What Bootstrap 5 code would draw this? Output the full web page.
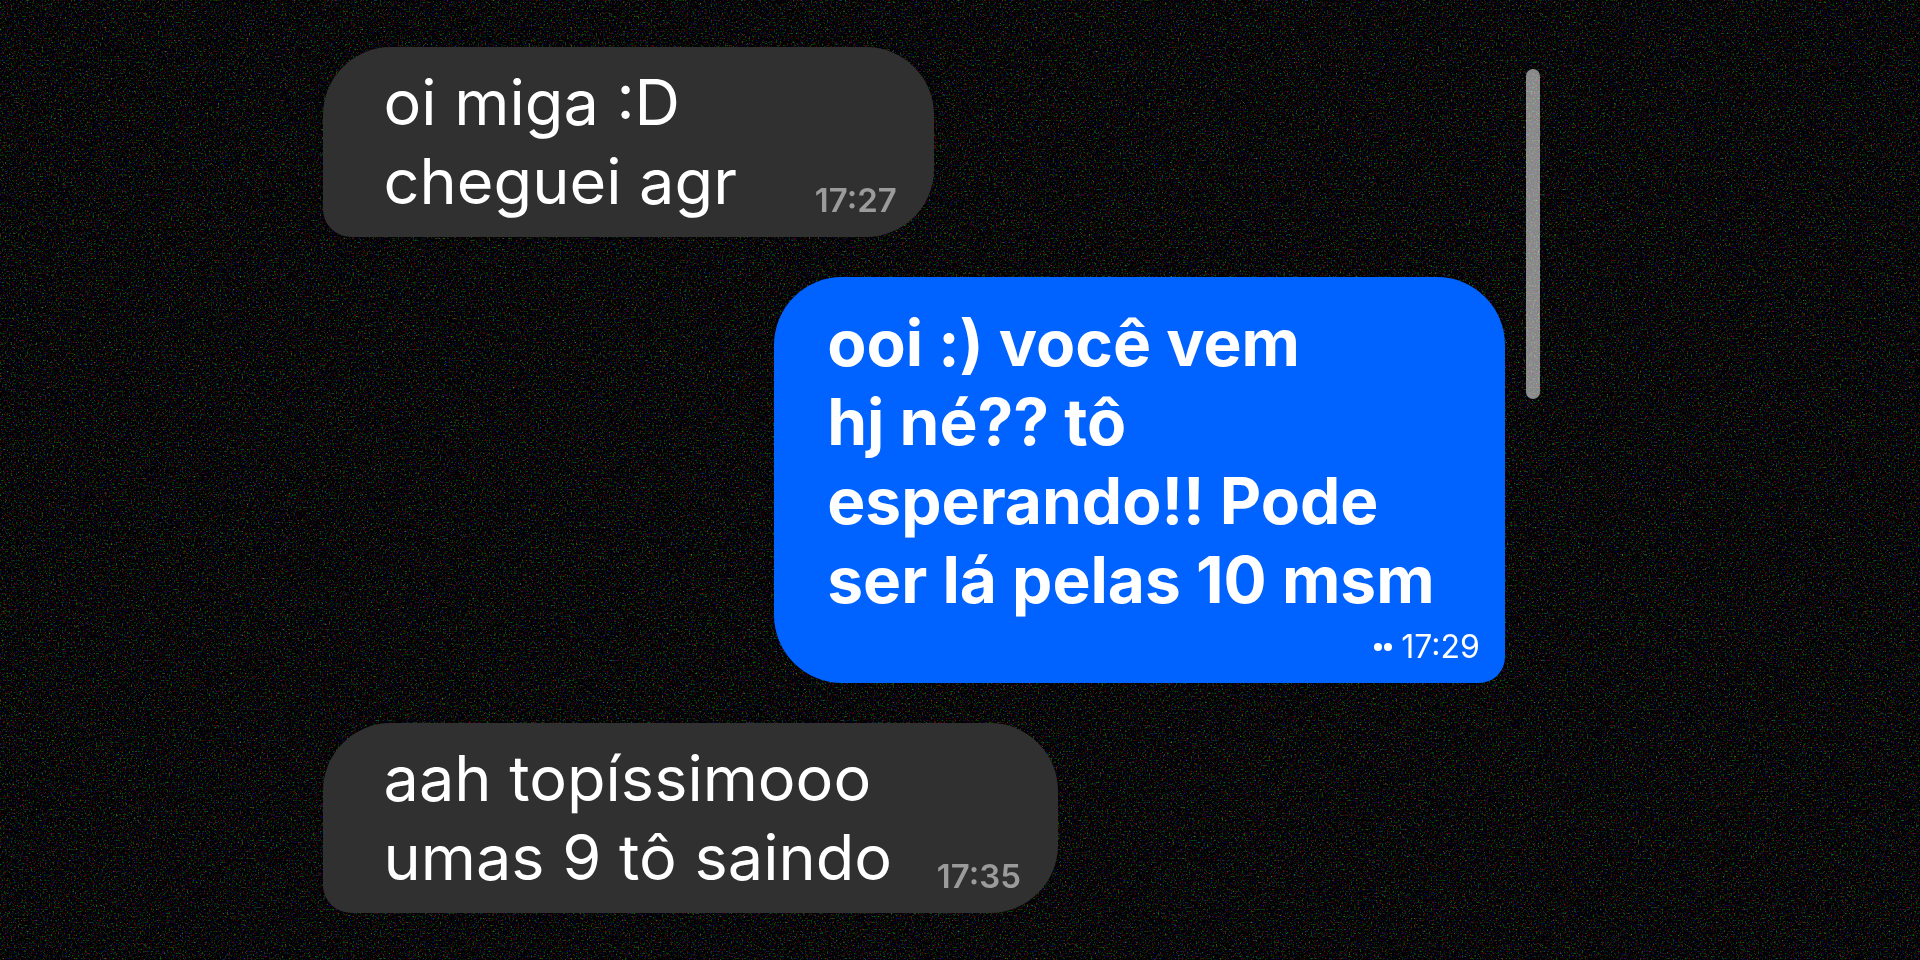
<!DOCTYPE html>
<html lang="pt-BR">
<head>
<meta charset="utf-8">
<meta name="viewport" content="width=device-width, initial-scale=1">
<title>Conversa</title>
<link href="https://cdn.jsdelivr.net/npm/bootstrap@5.3.0/dist/css/bootstrap.min.css" rel="stylesheet">
<style>
  body { background: #030304; font-family: Inter, "Liberation Sans", sans-serif; }
  .grain { z-index: 0; }
  .chat { z-index: 1; padding: 47px 19.8% 47px 16.8%; gap: 21px; }
  .thread { gap: 40px; }
  .bubble { border-radius: 68px; color: #fff; font-size: 63px; line-height: 79px; }
  .bubble-in { background: #303030; padding: 16px 37px 16px 61px; border-bottom-left-radius: 28px; }
  .bubble-out { background: #0062ff; padding: 26px 25px 12px 53px; border-bottom-right-radius: 26px; font-size: 64px; font-weight: 700; }
  .span-short { width: 51.7%; }
  .span-mid { width: 62.2%; }
  .span-long { width: 61.8%; }
  .stamp { font-size: 33px; line-height: 48px; }
  .bubble-in .stamp { color: #9b9b9b; font-weight: 600; margin-bottom: -3px; }
  .bubble-out .stamp { font-size: 32px; font-weight: 400; gap: 9px; margin-top: 4px; }
  .dots { gap: 2px; }
  .dots i { width: 8px; height: 8px; border-radius: 50%; background: #fff; }
  .scroll-thumb { width: 14px; height: 330px; margin-top: 22px; background: rgba(255,255,255,.53); }
</style>
</head>
<body>
<svg class="grain position-fixed top-0 start-0 w-100 h-100" aria-hidden="true">
  <filter id="noise" x="0" y="0" width="100%" height="100%" color-interpolation-filters="sRGB">
    <feTurbulence type="fractalNoise" baseFrequency="0.55" numOctaves="2" seed="4"/>
    <feColorMatrix values="1.5 0 0 0 -0.83  0 1.5 0 0 -0.83  0 0 1.5 0 -0.83  0 0 0 0 1"/>
  </filter>
  <rect width="100%" height="100%" filter="url(#noise)"/>
</svg>
<main class="chat position-relative d-flex align-items-start">
  <div class="thread flex-grow-1 d-flex flex-column">
    <article class="bubble bubble-in span-short align-self-start d-flex justify-content-between align-items-end">
      <p class="m-0 text-nowrap">oi miga :D<br>cheguei agr</p>
      <time class="stamp">17:27</time>
    </article>
    <article class="bubble bubble-out span-long align-self-end">
      <p class="m-0 text-nowrap">ooi :) você vem<br>hj né?? tô<br>esperando!! Pode<br>ser lá pelas 10 msm</p>
      <div class="stamp d-flex justify-content-end align-items-center">
        <span class="dots d-flex"><i></i><i></i></span>
        <time>17:29</time>
      </div>
    </article>
    <article class="bubble bubble-in span-mid align-self-start d-flex justify-content-between align-items-end">
      <p class="m-0 text-nowrap">aah topíssimooo<br>umas 9 tô saindo</p>
      <time class="stamp">17:35</time>
    </article>
  </div>
  <div class="scroll-thumb rounded-pill flex-shrink-0"></div>
</main>
<script src="https://cdn.jsdelivr.net/npm/bootstrap@5.3.0/dist/js/bootstrap.bundle.min.js"></script>
</body>
</html>
